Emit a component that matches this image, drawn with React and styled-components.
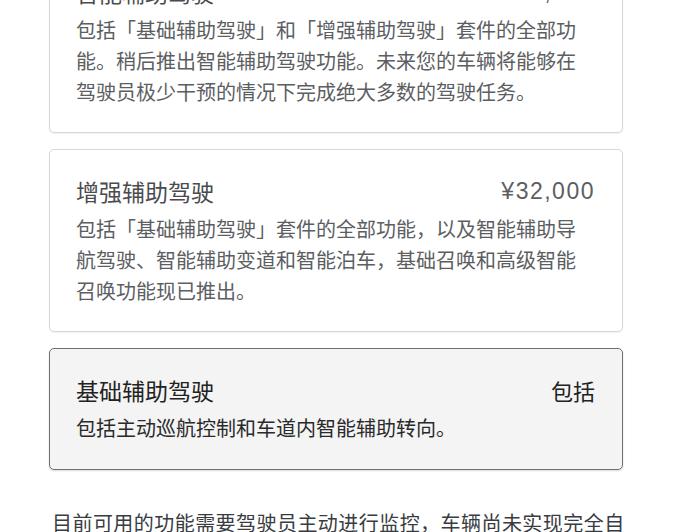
import styled, { createGlobalStyle } from "styled-components";

const GlobalStyle = createGlobalStyle`
  html, body {
    margin: 0;
    padding: 0;
    background: #ffffff;
    overflow: hidden;
  }
  body {
    font-family: "Noto Sans CJK SC", "Noto Sans", sans-serif;
  }
`;

const packages = [
  {
    title: "智能辅助驾驶",
    price: "¥64,000",
    text: "包括「基础辅助驾驶」和「增强辅助驾驶」套件的全部功能。稍后推出智能辅助驾驶功能。未来您的车辆将能够在驾驶员极少干预的情况下完成绝大多数的驾驶任务。",
  },
  {
    title: "增强辅助驾驶",
    price: "¥32,000",
    text: "包括「基础辅助驾驶」套件的全部功能，以及智能辅助导航驾驶、智能辅助变道和智能泊车，基础召唤和高级智能召唤功能现已推出。",
  },
  {
    title: "基础辅助驾驶",
    price: "包括",
    text: "包括主动巡航控制和车道内智能辅助转向。",
    selected: true,
  },
];

const App = () => {
  return (
    <>
      <GlobalStyle />
      <Page>
        <List>
          {packages.map((p) => (
            <Card key={p.title} $selected={p.selected}>
              <Head>
                <Title $selected={p.selected}>{p.title}</Title>
                <Price $cjk={p.price === "包括"} $selected={p.selected}>
                  {p.price}
                </Price>
              </Head>
              <Desc $selected={p.selected}>{p.text}</Desc>
            </Card>
          ))}
        </List>
        <Note>
          目前可用的功能需要驾驶员主动进行监控，车辆尚未实现完全自动驾驶。
        </Note>
      </Page>
    </>
  );
};

const Page = styled.div`
  width: 574px;
  margin: -50px 0 0 49px;
`;

const List = styled.div`
  display: flex;
  flex-direction: column;
  gap: 16px;
`;

const Card = styled.div`
  border: 1px solid ${(p) => (p.$selected ? "#6f7073" : "#d6d7d9")};
  border-radius: 5px;
  background: ${(p) => (p.$selected ? "#f4f4f4" : "#ffffff")};
  box-shadow: ${(p) =>
    p.$selected ? "0 1px 2px rgba(0,0,0,0.15)" : "0 1px 2px rgba(0,0,0,0.06)"};
  padding: 27px 27px ${(p) => (p.$selected ? "26px" : "25px")} 26px;
`;

const Head = styled.div`
  display: flex;
  justify-content: space-between;
  align-items: center;
  height: 28px;
`;

const Title = styled.div`
  font-size: 23px;
  line-height: 28px;
  color: ${(p) => (p.$selected ? "#222222" : "#4a4b4e")};
`;

const Price = styled.div`
  font-family: ${(p) =>
    p.$cjk
      ? `"Noto Sans CJK SC", sans-serif`
      : `"Liberation Sans", "Noto Sans CJK SC", sans-serif`};
  font-size: ${(p) => (p.$cjk ? "22px" : "23px")};
  letter-spacing: ${(p) => (p.$cjk ? "0" : "1.5px")};
  line-height: 28px;
  color: ${(p) => (p.$selected ? "#222222" : "#5c5e62")};
`;

const Desc = styled.p`
  margin: 8px 0 0;
  font-size: 20px;
  line-height: 31px;
  color: ${(p) => (p.$selected ? "#2a2a2a" : "#5c5e62")};
`;

const Note = styled.p`
  margin: 37px 0 0 3px;
  width: 590px;
  font-size: 20px;
  letter-spacing: 0.45px;
  line-height: 31px;
  color: #393c41;
`;

export default App;
